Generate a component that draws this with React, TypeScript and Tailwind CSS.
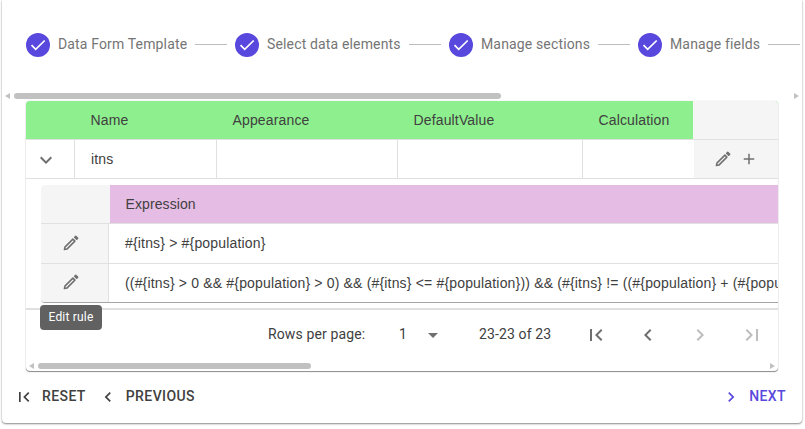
import React from "react";

const steps = [
  { label: "Data Form Template", box: "w-[209px]" },
  { label: "Select data elements", box: "w-[214px]" },
  { label: "Manage sections", box: "w-[189px]" },
  { label: "Manage fields", box: "w-[189px]" },
];

const paths = {
  plus: "M19 13h-6v6h-2v-6H5v-2h6V5h2v6h6v2z",
  left: "M15.41 7.41L14 6l-6 6 6 6 1.41-1.41L10.83 12z",
  right: "M10 6L8.59 7.41 13.17 12l-4.58 4.59L10 18l6-6z",
  down: "M16.59 8.59L12 13.17 7.41 8.59 6 10l6 6 6-6z",
  first: "M18.41 16.59L13.82 12l4.59-4.59L17 6l-6 6 6 6zM6 6h2v12H6z",
  last: "M5.59 7.41L10.18 12l-4.59 4.59L7 18l6-6-6-6zM16 6h2v12h-2z",
  drop: "M7 10l5 5 5-5z",
};

function Icon({ name, className = "" }: { name: keyof typeof paths; className?: string }) {
  return (
    <svg viewBox="0 0 24 24" fill="currentColor" className={`block shrink-0 ${className}`}>
      <path d={paths[name]} />
    </svg>
  );
}

function Pencil() {
  return (
    <svg
      viewBox="0 0 18 18"
      fill="none"
      stroke="currentColor"
      strokeWidth="1.5"
      strokeLinejoin="round"
      className="block size-[18px] shrink-0"
    >
      <path d="M2.4 15.6l.5-2.5 8-8 2 2-8 8z" />
      <path d="M12.7 3.3l1-1 2 2-1 1z" fill="currentColor" />
    </svg>
  );
}

function ScrollBar({ thumb, className = "" }: { thumb: string; className?: string }) {
  return (
    <div className={`flex h-[6px] items-center ${className}`}>
      <svg viewBox="0 0 5 6" className="h-[6px] w-[5px] shrink-0 fill-[#c1c1c1]">
        <path d="M5 0v6L0 3z" />
      </svg>
      <div className={`ml-1 h-[6px] rounded-full bg-[#c1c1c1] ${thumb}`} />
      <svg viewBox="0 0 5 6" className="ml-auto h-[6px] w-[5px] shrink-0 fill-[#c1c1c1]">
        <path d="M0 0v6l5-3z" />
      </svg>
    </div>
  );
}

function Rule({ text, height, pad = "" }: { text: string; height: string; pad?: string }) {
  return (
    <div className={`flex ${height}`}>
      <div className="flex w-[68px] shrink-0 items-center border-r border-b border-[#e0e0e0] bg-[#f5f5f5] pb-[2px] pl-[21px] text-[#6f6f6f]">
        <Pencil />
      </div>
      <div
        className={`flex grow items-center border-b border-[#e0e0e0] pl-4 tracking-[0.17px] whitespace-nowrap ${pad}`}
      >
        {text}
      </div>
    </div>
  );
}

export default function App() {
  return (
    <div className="h-[429px] overflow-hidden bg-white pl-[2px] font-['Roboto',sans-serif] text-sm text-[#404040]">
      <div className="flex h-[423px] w-[800px] flex-col rounded-b-[4px] bg-white shadow-[0_1px_2px_rgba(0,0,0,0.45),0_0_1px_rgba(0,0,0,0.2)]">
        <div className="mr-[2px] flex h-[93px] shrink-0 overflow-hidden pt-[33px] pl-6">
          {steps.map((s) => (
            <div key={s.label} className={`flex h-6 shrink-0 items-center ${s.box}`}>
              <svg viewBox="0 0 24 24" className="size-6 shrink-0">
                <circle cx="12" cy="12" r="12" fill="#5848dd" />
                <path d="M5.5 12.2l4.2 4.2 9-8.9" fill="none" stroke="#fff" strokeWidth="1.7" />
              </svg>
              <span className="-mt-[2px] ml-2 tracking-[0.15px] whitespace-nowrap text-[#757575]">{s.label}</span>
              <div className="mx-2 -mt-px h-px grow bg-[#bdbdbd]" />
            </div>
          ))}
        </div>
        <ScrollBar thumb="w-[487px]" className="mr-[3px] ml-[3px] shrink-0" />
        <div className="mt-[2px] ml-6 flex h-[270px] w-[752px] shrink-0 flex-col rounded-[4px] bg-white font-['Liberation_Sans',Arial,sans-serif] shadow-[0_1px_1px_rgba(0,0,0,0.45),0_0_1px_rgba(0,0,0,0.3)]">
          <div className="flex h-[39px] shrink-0 items-center overflow-hidden rounded-t-[4px] border-b border-[#e0e0e0] bg-[#8eef8e] tracking-[0.15px]">
            <div className="w-[64.5px]" />
            <div className="w-[142px]">Name</div>
            <div className="w-[181px]">Appearance</div>
            <div className="w-[185px]">DefaultValue</div>
            <div className="w-[94.5px]">Calculation</div>
            <div className="h-full grow bg-[#f5f5f5]" />
          </div>
          <div className="flex h-[39px] shrink-0 border-b border-[#e0e0e0]">
            <div className="flex w-[49px] items-center border-r border-[#e0e0e0] pt-px pl-2 text-[#6f6f6f]">
              <Icon name="down" className="size-6" />
            </div>
            <div className="flex w-[142px] items-center border-r border-[#e0e0e0] pl-4 tracking-[0.17px]">itns</div>
            <div className="w-[181px] border-r border-[#e0e0e0]" />
            <div className="w-[185px] border-r border-[#e0e0e0]" />
            <div className="w-[111px]" />
            <div className="flex grow items-center gap-2 bg-[#f5f5f5] pl-5 text-[#6f6f6f]">
              <Pencil />
              <Icon name="plus" className="size-[18px]" />
            </div>
          </div>
          <div className="relative h-[131px] shrink-0 border-b-2 border-[#e0e0e0] pt-[6px] pl-[15px]">
            <div className="h-[118px] overflow-hidden rounded-l-[4px] border-b border-[#a5a5a5]">
              <div className="flex h-[39px] border-b border-[#e0e0e0]">
                <div className="w-[68.5px] shrink-0 bg-[#f5f5f5]" />
                <div className="flex grow items-center bg-[#e5bce4] pl-4 tracking-[0.1px]">Expression</div>
              </div>
              <Rule height="h-10" pad="pb-[2px]" text="#{itns} > #{population}" />
              <Rule
                height="h-[39px]"
                text="((#{itns} > 0 && #{population} > 0) && (#{itns} <= #{population})) && (#{itns} != ((#{population} + (#{population}"
              />
            </div>
            <div className="absolute top-[126px] left-[14px] flex h-[25px] w-[62px] items-center justify-center rounded-[4px] bg-[#616161] pb-px font-['Roboto',sans-serif] text-xs tracking-[0.2px] text-white">
              Edit rule
            </div>
          </div>
          <div className="flex h-[53px] shrink-0 items-center pb-1 font-['Roboto',sans-serif] tracking-[0.13px]">
            <span className="-mt-px ml-[242px] w-[131px]">Rows per page:</span>
            <span className="-mt-px w-[22px]">1</span>
            <Icon name="drop" className="size-6 text-[#6f6f6f]" />
            <span className="-mt-px ml-[34px] w-[105px]">23-23 of 23</span>
            <Icon name="first" className="size-6 text-[#6f6f6f]" />
            <Icon name="left" className="ml-7 size-6 text-[#6f6f6f]" />
            <Icon name="right" className="ml-7 size-6 text-[#bdbdbd]" />
            <Icon name="last" className="ml-7 size-6 text-[#bdbdbd]" />
          </div>
          <ScrollBar thumb="w-[273px]" className="mx-[3px]" />
        </div>
        <div className="flex h-[50px] items-center pr-4 pl-3 font-medium tracking-[0.4px]">
          <Icon name="first" className="mt-px size-5" />
          <span className="ml-2">RESET</span>
          <Icon name="left" className="mt-px ml-3 size-5" />
          <span className="ml-2">PREVIOUS</span>
          <div className="ml-auto flex items-center text-[#5848dd]">
            <Icon name="right" className="mt-px size-5" />
            <span className="ml-2">NEXT</span>
          </div>
        </div>
      </div>
    </div>
  );
}
